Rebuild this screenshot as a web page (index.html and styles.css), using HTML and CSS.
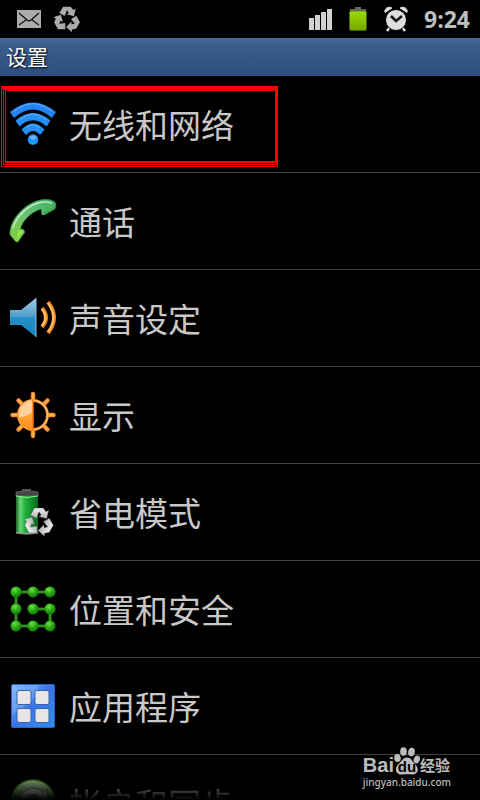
FILE: index.html
```
<!DOCTYPE html>
<html lang="zh-CN">
<head>
    <meta charset="UTF-8">
    <meta name="viewport" content="width=device-width, initial-scale=1">
    <title>设置</title>
    <link rel="stylesheet" href="styles.css">
</head>
<body>
    <svg class="defs" width="0" height="0" aria-hidden="true">
        <defs>
            <path id="arrow" d="M-23,-19 L-12,-38 L11,-38 L19,-28 L26,-32 L21,-9 L-1,-15 L6,-19 L0,-27 L-7,-10Z"/>
            <g id="recycle">
                <use href="#arrow"/>
                <use href="#arrow" transform="rotate(120)"/>
                <use href="#arrow" transform="rotate(240)"/>
            </g>
            <linearGradient id="blue" x1="0" y1="0" x2="0" y2="1">
                <stop offset="0" stop-color="#3b8ef0"/>
                <stop offset="0.5" stop-color="#1f8dfa"/>
                <stop offset="1" stop-color="#16aaff"/>
            </linearGradient>
            <linearGradient id="phone" x1="1" y1="0" x2="0" y2="1">
                <stop offset="0" stop-color="#3fae63"/>
                <stop offset="0.5" stop-color="#6cc274"/>
                <stop offset="1" stop-color="#80d03c"/>
            </linearGradient>
            <linearGradient id="speaker" x1="0" y1="0" x2="0" y2="1">
                <stop offset="0" stop-color="#a5cbe3"/>
                <stop offset="0.48" stop-color="#4f9dcb"/>
                <stop offset="0.5" stop-color="#2291cc"/>
                <stop offset="1" stop-color="#1f82b4"/>
            </linearGradient>
            <linearGradient id="orange" x1="0" y1="0" x2="0" y2="1">
                <stop offset="0" stop-color="#ffbe78"/>
                <stop offset="0.5" stop-color="#ffa63c"/>
                <stop offset="1" stop-color="#ff8a1c"/>
            </linearGradient>
            <linearGradient id="cell" x1="0" y1="0" x2="1" y2="0">
                <stop offset="0" stop-color="#1c6a2a"/>
                <stop offset="0.2" stop-color="#6fd47c"/>
                <stop offset="0.4" stop-color="#22b53c"/>
                <stop offset="1" stop-color="#06681a"/>
            </linearGradient>
            <linearGradient id="silver" x1="0" y1="0" x2="0" y2="1">
                <stop offset="0" stop-color="#eeeeee"/>
                <stop offset="1" stop-color="#b4b4b4"/>
            </linearGradient>
            <radialGradient id="ball" cx="0.4" cy="0.3" r="0.7">
                <stop offset="0" stop-color="#7be04a"/>
                <stop offset="0.4" stop-color="#32b81a"/>
                <stop offset="1" stop-color="#15750a"/>
            </radialGradient>
            <linearGradient id="tile" x1="0" y1="0" x2="1" y2="1">
                <stop offset="0" stop-color="#7db8f5"/>
                <stop offset="0.5" stop-color="#3a74e6"/>
                <stop offset="1" stop-color="#2c90ee"/>
            </linearGradient>
            <linearGradient id="sync" x1="0" y1="0" x2="0" y2="1">
                <stop offset="0" stop-color="#c4e0ba"/>
                <stop offset="0.4" stop-color="#5c9f48"/>
                <stop offset="1" stop-color="#2d6a1c"/>
            </linearGradient>
            <linearGradient id="charge" x1="0" y1="0" x2="0" y2="1">
                <stop offset="0" stop-color="#9bdb00"/>
                <stop offset="1" stop-color="#76a800"/>
            </linearGradient>
        </defs>
    </svg>

    <header class="status">
        <svg width="24" height="18" viewBox="0 0 24 18" role="img" aria-label="邮件">
            <path d="M0 0h24v18H0z" fill="#ababab"/>
            <path d="M2 3l8 7q2 1.500 4 0l8-7M2 15l7-5M22 15l-7-5" fill="none" stroke="#111" stroke-width="1.300"/>
        </svg>
        <svg width="26" height="26" viewBox="-39 -40 78 78" fill="#ababab" role="img" aria-label="省电">
            <use href="#recycle"/>
        </svg>
        <div class="status-right">
            <svg width="24" height="24" viewBox="0 0 24 24" fill="#d2d2d2" role="img" aria-label="信号">
                <path d="M1 11h5v12H1zM7 8h5v15H7zM13 5h5v18h-5zM19 2h5v21h-5z"/>
                <path d="M6.500 8v15M12.500 5v18M18.500 2v21" stroke="#000"/>
            </svg>
            <svg width="20" height="26" viewBox="0 0 20 26" role="img" aria-label="电池">
                <path d="M7 1h6v2h5v3H2V3h5z" fill="#696969"/>
                <rect x="1.500" y="5" width="17" height="19.500" rx="1.500" fill="url(#charge)" stroke="#4a6d00" stroke-width="0.600"/>
            </svg>
            <svg width="24" height="26" viewBox="0 0 24 26" role="img" aria-label="闹钟">
                <path d="M6 21l-3 4M18 21l3 4" stroke="#dedede" stroke-width="2.500"/>
                <path d="M1 6.500C0 2 5 0 8 2zM23 6.500C24 2 19 0 16 2z" fill="#dedede" stroke="#dedede"/>
                <circle cx="12" cy="14" r="10.500" fill="#dedede" stroke="#000" stroke-width="1"/>
                <path d="M7 10l5 5 6-5" fill="none" stroke="#111" stroke-width="2.500"/>
            </svg>
            <span class="time">9:24</span>
        </div>
    </header>

    <h1 class="title">设置</h1>

    <nav class="list">
        <a class="item" href="#network">
            <svg class="icon" viewBox="0 0 48 48" aria-hidden="true">
                <g fill="#2490f7">
                    <path d="M1 12Q24-7 47 12L43 18Q24 1 5 18Z" fill="#2383f3"/>
                    <path d="M6.500 20.500Q24 5.500 41.500 20.500L37.500 26.500Q24 14 10.500 26.500Z"/>
                    <path d="M12.500 29.500Q24 17.500 35.500 29.500L31 35Q24 27 17 35Z"/>
                </g>
                <path d="M5 11.500Q24-4 43 11.500M11 19.500Q24 8.500 37 19.500M17 28Q24 21 31 28" fill="none" stroke="#62b4fa"/>
                <circle cx="24" cy="39.500" r="5.300" fill="url(#blue)"/>
                <ellipse cx="24" cy="37.500" rx="3" ry="2" fill="#62b8ff"/>
            </svg>
            <span>无线和网络</span>
            <span class="mark"><span><span></span></span></span>
        </a>
        <a class="item" href="#call">
            <svg class="icon" viewBox="0 0 48 48" aria-hidden="true">
                <path d="M46 5C40 1 32 2 25 5C11 11 0 26 1 38L7 45L9 45L16 35L14 32L11.500 32C13 25 20 16 32 12L33 18L35 18L46 12L47 8Z" fill="url(#phone)" stroke="#337f43" stroke-width="0.600"/>
                <path d="M4 31C8 18 20 8 31 5.500C36 4.500 40 4.500 43 6.500" fill="none" stroke="#c8efce" stroke-width="1.300"/>
                <path d="M34 15l11-5v2l-10 6z" fill="#40a94f"/>
                <path d="M9 33l5 1-6 9z" fill="#99ee40"/>
            </svg>
            <span>通话</span>
        </a>
        <a class="item" href="#sound">
            <svg class="icon" viewBox="0 0 48 48" aria-hidden="true">
                <path d="M1 16h11L27 4v39L12 31H1z" fill="url(#speaker)"/>
                <path d="M27 4v39" stroke="#8abedb" stroke-width="1"/>
                <path d="M33 14q8 9.500 0 19M39 8q12 15.500 0 31" fill="none" stroke="#f4791e" stroke-width="4"/>
                <path d="M33 15q7 8.500 0 17M39 9q11 14.500 0 29" fill="none" stroke="#ffc06a" stroke-width="2"/>
            </svg>
            <span>声音设定</span>
        </a>
        <a class="item" href="#display">
            <svg class="icon" viewBox="0 0 48 48" aria-hidden="true">
                <g stroke="#f18a2a" stroke-width="4.500" stroke-linecap="round">
                    <path d="M24 3v7M24 38v7M3.500 24h7M37.500 24h7M9.500 9.500l5 5M38.500 9.500l-5 5M9.500 38.500l5-5M38.500 38.500l-5-5"/>
                    <path d="M24 3v7M24 38v7M3.500 24h7M37.500 24h7M9.500 9.500l5 5M38.500 9.500l-5 5M9.500 38.500l5-5M38.500 38.500l-5-5" stroke="#ffb052" stroke-width="2"/>
                </g>
                <circle cx="24" cy="24" r="14.500" fill="#000" stroke="#ee8526" stroke-width="3"/>
                <circle cx="24" cy="24" r="14.500" fill="none" stroke="#ffbd70" stroke-width="1.500"/>
                <path d="M24 9A15 15 0 0 0 24 39z" fill="url(#orange)"/>
                <path d="M24 10A14 14 0 0 0 10 26Q19 26 24 20z" fill="#ffd09b"/>
                <path d="M24 9v30" stroke="#f07510" stroke-width="1.500"/>
            </svg>
            <span>显示</span>
        </a>
        <a class="item" href="#power">
            <svg class="icon" viewBox="0 0 48 48" aria-hidden="true">
                <path d="M13 1h9v3h-9z" fill="#555"/>
                <path d="M7 8V4q11-3 22 0v4z" fill="#454545" stroke="#777" stroke-width="0.600"/>
                <path d="M7 8h22v37q-11 2-22 0z" fill="url(#cell)"/>
                <path d="M7 8q11 3 22 0" fill="none" stroke="#8bea98"/>
                <path d="M7 44q11 2 22 0v1.500q-11 2-22 0z" fill="#999"/>
                <g transform="translate(30 34) scale(0.370)" fill="url(#silver)" stroke="#444" stroke-width="1">
                    <use href="#recycle"/>
                </g>
            </svg>
            <span>省电模式</span>
        </a>
        <a class="item" href="#security">
            <svg class="icon" viewBox="0 0 48 48" aria-hidden="true">
                <path d="M41 7H7v34h34V24H24" fill="none" stroke="#1f7c0e" stroke-width="3"/>
                <path d="M41 7H7v34h34V24H24" fill="none" stroke="#46a62f" stroke-width="1"/>
                <g fill="url(#ball)">
                    <circle cx="7" cy="7" r="5.500"/><circle cx="24" cy="7" r="5.500"/><circle cx="41" cy="7" r="5.500"/>
                    <circle cx="7" cy="24" r="5.500"/><circle cx="24" cy="24" r="5.500"/><circle cx="41" cy="24" r="5.500"/>
                    <circle cx="7" cy="41" r="5.500"/><circle cx="24" cy="41" r="5.500"/><circle cx="41" cy="41" r="5.500"/>
                </g>
            </svg>
            <span>位置和安全</span>
        </a>
        <a class="item" href="#apps">
            <svg class="icon" viewBox="0 0 48 48" aria-hidden="true">
                <rect x="2.500" y="2.500" width="43" height="43" rx="1.500" fill="url(#tile)" stroke="#2d60c4"/>
                <path d="M3 3h27Q26 22 3 32z" fill="#8fc0ff" opacity="0.350"/>
                <g fill="#e6e6e6" stroke="#3c62ae">
                    <rect x="8" y="8.500" width="14" height="14" rx="2"/>
                    <rect x="26" y="8.500" width="14" height="14" rx="2"/>
                    <rect x="8" y="26.500" width="14" height="14" rx="2"/>
                    <rect x="26" y="26.500" width="14" height="14" rx="2"/>
                </g>
            </svg>
            <span>应用程序</span>
        </a>
        <a class="item" href="#accounts">
            <svg class="icon" viewBox="0 0 48 48" aria-hidden="true">
                <circle cx="24" cy="23" r="22" fill="url(#sync)" stroke="#4c9a10" stroke-width="1.500"/>
                <path d="M10 25C10 8 29 6 34 14L38 10V23H26L30 18C26 13 17 15 17 25z" fill="#dcdcdc" stroke="#5c7a54"/>
                <path d="M38 25C38 40 19 42 14 34L10 38V27H20L18 31C23 35 31 33 31 25z" fill="#dcdcdc"/>
            </svg>
            <span>帐户和同步</span>
        </a>
    </nav>

    <footer class="watermark">
        <div class="brand">
            <span class="bai">Bai</span>
            <span class="paw">
                <svg width="26" height="28" viewBox="0 0 26 28" fill="#bcbcbc" aria-hidden="true">
                    <ellipse cx="3.500" cy="11" rx="3.200" ry="4" transform="rotate(-12 3.500 11)"/>
                    <ellipse cx="9.500" cy="4.500" rx="3.300" ry="4.300"/>
                    <ellipse cx="17.500" cy="5" rx="3.300" ry="4.300" transform="rotate(10 17.500 5)"/>
                    <ellipse cx="22.800" cy="12.500" rx="3" ry="3.900" transform="rotate(20 22.800 12.500)"/>
                    <path d="M13 10.500C17 10.500 18 14 21 17C26 22 24 28 18 27.500C14 27 12 27 8 27.500C2 28 0 22 4 17.500C8 14 9 10.500 13 10.500z"/>
                </svg>
                <span class="du">du</span>
            </span>
            <span class="jingyan">经验</span>
        </div>
        <div class="url">jingyan.baidu.com</div>
    </footer>
</body>
</html>
```
FILE: styles.css
```
* {
    box-sizing: border-box;
}
body {
    margin: 0;
    height: 100vh;
    display: flex;
    flex-direction: column;
    overflow: hidden;
    position: relative;
    background: #000;
    color: #c8c8c8;
    font-family: "Noto Sans", "Noto Sans CJK SC", sans-serif;
}
.defs {
    position: absolute;
}
.status {
    height: 38px;
    flex: none;
    display: flex;
    align-items: center;
    gap: 13px;
    padding: 0 10px 0 17px;
}
.status-right {
    margin-left: auto;
    display: flex;
    align-items: center;
    gap: 16px;
}
.time {
    color: #bebebe;
    font-family: "Open Sans", "Noto Sans", sans-serif;
    font-size: 23px;
    font-weight: 700;
    line-height: 38px;
}
.title {
    flex: none;
    height: 38px;
    margin: 0;
    padding: 0 6px;
    background: linear-gradient(#476a99, #3a5d8d 20%, #2e4f7e);
    color: #fff;
    font-family: "Noto Sans CJK SC", sans-serif;
    font-size: 21px;
    font-weight: 400;
    line-height: 36px;
    text-shadow: 1px 1px 2px #000;
}
.list {
    flex: 1;
    min-height: 0;
    overflow: hidden;
    position: relative;
}
/* fading edge at the bottom of the list */
.list::after {
    content: "";
    position: absolute;
    left: 0;
    right: 0;
    bottom: 0;
    height: 32px;
    background: linear-gradient(transparent, #000);
}
.item {
    position: relative;
    display: flex;
    align-items: center;
    gap: 12px;
    height: 97px;
    padding: 0 9px;
    border-bottom: 1px solid #424242;
    color: #c8c8c8;
    font-family: "Noto Sans CJK SC", sans-serif;
    font-size: 33px;
    line-height: 48px;
    text-decoration: none;
}
.icon {
    flex: none;
    width: 48px;
    height: 48px;
}
/* red box made of three frames, one inside the other */
.mark {
    position: absolute;
    left: 1px;
    top: 10px;
    width: 277px;
    height: 81px;
}
.mark,
.mark span {
    display: block;
    border: 1px solid #f00;
    padding: 0 0 1px 1px;
}
.mark span {
    height: 100%;
}
.mark {
    border-top-width: 3px;
}
.mark span span {
    border-bottom-width: 2px;
}
.watermark {
    position: absolute;
    right: 29px;
    bottom: 11px;
    color: #bcbcbc;
}
.brand {
    display: flex;
    align-items: flex-end;
    height: 28px;
}
.bai {
    font-family: "Liberation Sans", sans-serif;
    font-size: 20px;
    font-weight: 700;
    line-height: 20px;
}
.paw {
    position: relative;
    height: 28px;
}
.du {
    position: absolute;
    left: 0;
    right: 0;
    bottom: 0;
    color: #000;
    font-family: "Liberation Sans", sans-serif;
    font-size: 15px;
    font-weight: 700;
    line-height: 16px;
    text-align: center;
}
.jingyan {
    font-family: "Noto Sans CJK SC", sans-serif;
    font-size: 15px;
    font-weight: 700;
    line-height: 20px;
}
.url {
    font-family: "Noto Sans", sans-serif;
    font-size: 10px;
    font-weight: 500;
    line-height: 14px;
}
```
